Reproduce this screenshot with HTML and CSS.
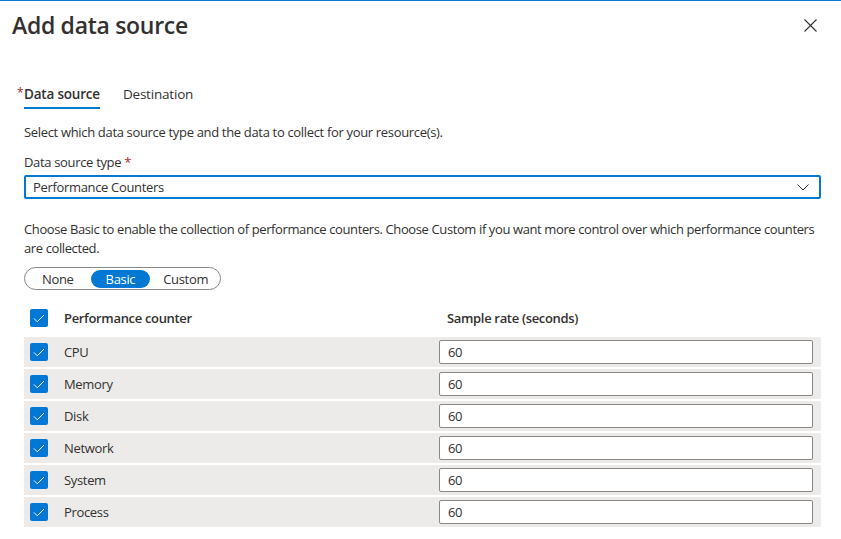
FILE: index.html
```html
<!DOCTYPE html>
<html lang="en">
<head>
<meta charset="utf-8">
<title>Add data source</title>
<link rel="stylesheet" href="styles.css">
</head>
<body>
<div class="panel">
  <header class="panel-header">
    <h1 class="panel-title">Add data source</h1>
    <button class="close-btn" aria-label="Close">
      <svg width="13" height="13" viewBox="0 0 13 13"><path d="M0.5 0.5 L12.5 12.5 M12.5 0.5 L0.5 12.5" stroke="#323130" stroke-width="1.1" fill="none"/></svg>
    </button>
  </header>

  <div class="content">
    <nav class="tabs">
      <div class="tab active"><span class="req-star">*</span>Data source</div>
      <div class="tab">Destination</div>
    </nav>

    <p class="intro">Select which data source type and the data to collect for your resource(s).</p>

    <label class="field-label">Data source type <span class="req">*</span></label>
    <div class="dropdown">
      <span>Performance Counters</span>
      <svg class="chevron" width="12" height="7" viewBox="0 0 12 7"><path d="M0.5 0.5 L6 6 L11.5 0.5" stroke="#323130" stroke-width="1" fill="none"/></svg>
    </div>

    <p class="help">Choose Basic to enable the collection of performance counters. Choose Custom if you want more control over which performance counters are collected.</p>

    <div class="pill-group">
      <span class="pill">None</span>
      <span class="pill selected">Basic</span>
      <span class="pill last">Custom</span>
    </div>

    <div class="table">
      <div class="row head">
        <div class="cell-check"><span class="checkbox"><svg width="12" height="9" viewBox="0 0 12 9"><path d="M1 4.5 L4.3 7.8 L11 1" stroke="#fff" stroke-width="1" fill="none"/></svg></span></div>
        <div class="cell-name">Performance counter</div>
        <div class="cell-rate">Sample rate (seconds)</div>
      </div>
      <div class="row">
        <div class="cell-check"><span class="checkbox"><svg width="12" height="9" viewBox="0 0 12 9"><path d="M1 4.5 L4.3 7.8 L11 1" stroke="#fff" stroke-width="1" fill="none"/></svg></span></div>
        <div class="cell-name">CPU</div>
        <div class="cell-rate"><div class="input">60</div></div>
      </div>
      <div class="row">
        <div class="cell-check"><span class="checkbox"><svg width="12" height="9" viewBox="0 0 12 9"><path d="M1 4.5 L4.3 7.8 L11 1" stroke="#fff" stroke-width="1" fill="none"/></svg></span></div>
        <div class="cell-name">Memory</div>
        <div class="cell-rate"><div class="input">60</div></div>
      </div>
      <div class="row">
        <div class="cell-check"><span class="checkbox"><svg width="12" height="9" viewBox="0 0 12 9"><path d="M1 4.5 L4.3 7.8 L11 1" stroke="#fff" stroke-width="1" fill="none"/></svg></span></div>
        <div class="cell-name">Disk</div>
        <div class="cell-rate"><div class="input">60</div></div>
      </div>
      <div class="row">
        <div class="cell-check"><span class="checkbox"><svg width="12" height="9" viewBox="0 0 12 9"><path d="M1 4.5 L4.3 7.8 L11 1" stroke="#fff" stroke-width="1" fill="none"/></svg></span></div>
        <div class="cell-name">Network</div>
        <div class="cell-rate"><div class="input">60</div></div>
      </div>
      <div class="row">
        <div class="cell-check"><span class="checkbox"><svg width="12" height="9" viewBox="0 0 12 9"><path d="M1 4.5 L4.3 7.8 L11 1" stroke="#fff" stroke-width="1" fill="none"/></svg></span></div>
        <div class="cell-name">System</div>
        <div class="cell-rate"><div class="input">60</div></div>
      </div>
      <div class="row">
        <div class="cell-check"><span class="checkbox"><svg width="12" height="9" viewBox="0 0 12 9"><path d="M1 4.5 L4.3 7.8 L11 1" stroke="#fff" stroke-width="1" fill="none"/></svg></span></div>
        <div class="cell-name">Process</div>
        <div class="cell-rate"><div class="input">60</div></div>
      </div>
    </div>
  </div>
</div>
</body>
</html>
```

FILE: styles.css
```css
* { box-sizing: border-box; }

body {
  margin: 0;
  background: #fff;
  color: #323130;
  font-family: "Open Sans", "Noto Sans", "Liberation Sans", sans-serif;
  font-size: 13px;
  letter-spacing: -0.33px;
}

.panel {
  border-top: 1px solid #0078d4;
}

.panel-header {
  display: flex;
  justify-content: space-between;
  align-items: center;
  height: 48px;
  padding: 0 24px 0 12px;
}

.panel-title {
  margin: 0;
  font-size: 23px;
  font-weight: 600;
  line-height: 30px;
  letter-spacing: -0.3px;
}

.close-btn {
  border: 0;
  background: transparent;
  padding: 0;
  width: 13px;
  height: 13px;
  display: flex;
}

.content {
  padding: 0 20px 0 24px;
}

.tabs {
  display: flex;
  gap: 23px;
  margin-top: 27px;
}

.tab {
  position: relative;
  padding: 8px 0 5px;
  line-height: 20px;
  font-size: 13.5px;
  letter-spacing: -0.2px;
}

.tab.active {
  font-weight: 600;
}

.tab.active::after {
  content: "";
  position: absolute;
  left: 0;
  right: 0;
  bottom: 0;
  height: 2px;
  background: #0078d4;
}

.req-star {
  position: absolute;
  left: -7px;
  top: 7px;
  color: #a4262c;
  font-weight: 400;
  font-size: 12px;
}

.intro {
  margin: 14px 0 0;
  line-height: 19px;
}

.field-label {
  display: block;
  margin-top: 11px;
  line-height: 19px;
}

.req {
  color: #a4262c;
}

.dropdown {
  margin-top: 3px;
  height: 24px;
  border: 2px solid #0078d4;
  border-radius: 2px;
  display: flex;
  align-items: center;
  justify-content: space-between;
  padding: 0 10px 0 7px;
}

.help {
  margin: 21px 0 0;
  line-height: 19px;
  letter-spacing: -0.39px;
}

.pill-group {
  display: inline-flex;
  align-items: center;
  gap: 2px;
  margin-top: 9px;
  height: 23px;
  padding: 0 2px;
  border: 1px solid #8a8886;
  border-radius: 12px;
}

.pill {
  height: 18px;
  line-height: 18px;
  padding: 0 15px;
  border-radius: 9px;
}

.pill.last {
  padding: 0 10px 0 11px;
}

.pill.selected {
  background: #0078d4;
  color: #fff;
}

.table {
  margin-top: 11px;
}

.row {
  display: flex;
  align-items: center;
  height: 30px;
  margin-top: 2px;
  background: #edebe9;
}

.row.head {
  height: 34px;
  margin-top: 0;
  background: #fff;
  font-weight: 600;
}

.cell-check {
  width: 40px;
  padding-left: 6px;
  display: flex;
  align-items: center;
}

.checkbox {
  width: 18px;
  height: 18px;
  border-radius: 2px;
  background: #0078d4;
  display: flex;
  align-items: center;
  justify-content: center;
}

.cell-name {
  width: 375px;
}

.cell-rate {
  flex: 1;
  padding-right: 8px;
}

.head .cell-rate {
  padding-left: 8px;
}

.input {
  height: 24px;
  line-height: 22px;
  border: 1px solid #8a8886;
  border-radius: 2px;
  background: #fff;
  padding-left: 8px;
}
```
